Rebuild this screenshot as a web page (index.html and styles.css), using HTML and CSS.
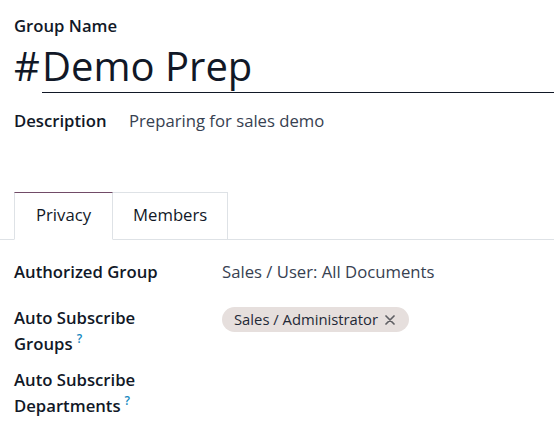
FILE: index.html
```html
<!DOCTYPE html>
<html lang="en">
<head>
<meta charset="utf-8">
<title>#Demo Prep</title>
<link rel="stylesheet" href="styles.css">
</head>
<body>
<div class="sheet">
  <div class="title-block">
    <div class="label">Group Name</div>
    <div class="title-row">
      <span class="hash">#</span>
      <div class="title-input">Demo Prep</div>
    </div>
  </div>
  <div class="desc-row">
    <div class="label">Description</div>
    <div class="value">Preparing for sales demo</div>
  </div>

  <div class="tabs">
    <div class="tab active">Privacy</div>
    <div class="tab">Members</div>
  </div>

  <div class="fields">
    <div class="field-row row-auth">
      <div class="label">Authorized Group</div>
      <div class="value">Sales / User: All Documents</div>
    </div>
    <div class="field-row row-groups">
      <div class="label">Auto Subscribe<br>Groups<sup class="help">?</sup></div>
      <div class="value">
        <span class="tag">Sales / Administrator
          <svg class="tag-x" width="10" height="10" viewBox="0 0 10 10"><path d="M1 1L9 9M9 1L1 9" stroke="#5f5f63" stroke-width="1.7" stroke-linecap="round"/></svg>
        </span>
      </div>
    </div>
    <div class="field-row row-deps">
      <div class="label">Auto Subscribe<br>Departments<sup class="help">?</sup></div>
      <div class="value"></div>
    </div>
  </div>
</div>
</body>
</html>
```
FILE: styles.css
```css
html, body {
  margin: 0;
  padding: 0;
  background: #ffffff;
}
body {
  font-family: "Open Sans", "Noto Sans", sans-serif;
  font-size: 16.7px;
  line-height: 24px;
  color: #374151;
}
.sheet {
  padding-top: 14px;
}
.label {
  font-weight: 600;
  color: #111827;
}
.title-block {
  padding-left: 14px;
}
.title-row {
  display: flex;
  margin-top: 4px;
  font-size: 40px;
  line-height: 48px;
  color: #111827;
}
.hash {
  width: 28px;
  flex: none;
}
.title-input {
  flex: 1;
  border-bottom: 1px solid #111827;
  padding-bottom: 2px;
}
.desc-row {
  display: grid;
  grid-template-columns: 115px 1fr;
  padding-left: 14px;
  margin-top: 16px;
}
.tabs {
  display: flex;
  margin-top: 59px;
  padding-left: 14px;
  border-bottom: 1px solid #dee2e6;
}
.tab {
  padding: 10px 20px 12px;
  border: 1px solid #dee2e6;
  border-left: none;
  margin-bottom: -1px;
  color: #111827;
}
.tab.active {
  padding: 10px 21px 12px;
  border-left: 1px solid #dee2e6;
  border-top-color: #714b67;
  border-bottom-color: #ffffff;
  background: #ffffff;
}
.fields {
  padding-left: 14px;
  padding-top: 19px;
}
.field-row {
  display: grid;
  grid-template-columns: 208px 1fr;
  line-height: 26px;
}
.row-auth {
  margin-bottom: 20px;
}
.row-groups {
  margin-bottom: 10px;
}
.help {
  font-size: 12px;
  font-weight: 600;
  color: #1588c0;
  margin-left: 4px;
  line-height: 0;
  vertical-align: 7px;
}
.tag {
  display: inline-flex;
  align-items: center;
  height: 25px;
  margin-top: 2px;
  padding: 0 14px 0 12px;
  border-radius: 13px;
  background: #e6dfdd;
  font-size: 14.8px;
  font-weight: 500;
  color: #1f2937;
  line-height: 25px;
}
.tag-x {
  margin-left: 7px;
}
```
